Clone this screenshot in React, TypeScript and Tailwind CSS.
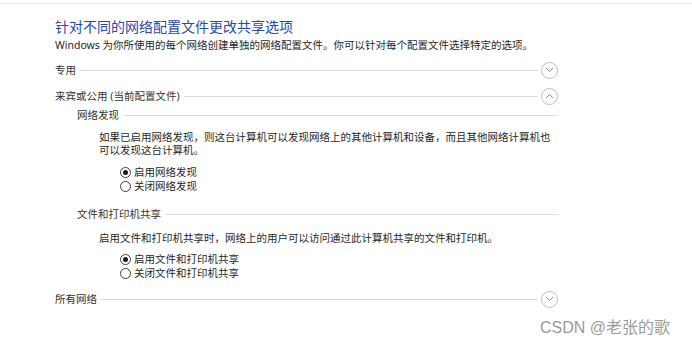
const Chevron = ({ up }: { up?: boolean }) => (
    <div className="w-[17px] h-[17px] rounded-full border border-[#bcbcbc] flex items-center justify-center shrink-0 ml-[3px]">
        <svg width="9" height="6" viewBox="0 0 9 6" fill="none">
            {up ? (
                <path d="M1 5 L4.5 1.5 L8 5" stroke="#8a8a8a" strokeWidth="1" />
            ) : (
                <path d="M1 1 L4.5 4.5 L8 1" stroke="#8a8a8a" strokeWidth="1" />
            )}
        </svg>
    </div>
);

const Section = ({ title, up }: { title: string; up?: boolean }) => (
    <div className="flex items-center h-[18px] w-[503px]">
        <span className="text-[10.5px] leading-[14px] text-[#333] whitespace-nowrap">{title}</span>
        <div className="flex-1 h-px bg-[#d9d9d9] ml-[4px]" />
        <Chevron up={up} />
    </div>
);

const SubSection = ({ title }: { title: string }) => (
    <div className="flex items-center h-[14px] w-[481px] ml-[22px]">
        <span className="text-[10.5px] leading-[14px] text-[#333] whitespace-nowrap">{title}</span>
        <div className="flex-1 h-px bg-[#dcdcdc] ml-[5px]" />
    </div>
);

const Radio = ({ label, checked }: { label: string; checked?: boolean }) => (
    <div className="flex items-center h-[14px]">
        <div className="w-[11px] h-[11px] rounded-full border border-[#3c3c3c] flex items-center justify-center bg-white">
            {checked && <div className="w-[5px] h-[5px] rounded-full bg-[#1a1a1a]" />}
        </div>
        <span className="ml-[3px] text-[10.5px] leading-[14px] text-[#1f1f1f] whitespace-nowrap">{label}</span>
    </div>
);

const App = () => {
    return (
        <div className="relative w-[692px] h-[347px] bg-white overflow-hidden" style={{ fontFamily: '"Noto Sans", "Noto Sans CJK SC", sans-serif' }}>
            <div className="mt-[3px] h-px bg-[#e2e2e2]" />

            <div className="pl-[55px]">
                <p className="mt-[14px] text-[14px] leading-[18px] text-[#2a4aa8] whitespace-nowrap">针对不同的网络配置文件更改共享选项</p>
                <p className="mt-[2px] text-[10.5px] leading-[14px] text-[#1f1f1f] whitespace-nowrap">
                    Windows 为你所使用的每个网络创建单独的网络配置文件。你可以针对每个配置文件选择特定的选项。
                </p>

                <div className="mt-[9px]">
                    <Section title="专用" />
                </div>
                <div className="mt-[8px]">
                    <Section title="来宾或公用 (当前配置文件)" up />
                </div>

                <div className="mt-[3px]">
                    <SubSection title="网络发现" />
                </div>
                <p className="mt-[9px] ml-[44px] text-[10.5px] leading-[13px] text-[#1f1f1f] whitespace-nowrap">
                    如果已启用网络发现，则这台计算机可以发现网络上的其他计算机和设备，而且其他网络计算机也
                    <br />
                    可以发现这台计算机。
                </p>
                <div className="mt-[8px] ml-[65px] flex flex-col">
                    <Radio label="启用网络发现" checked />
                    <Radio label="关闭网络发现" />
                </div>

                <div className="mt-[14px]">
                    <SubSection title="文件和打印机共享" />
                </div>
                <p className="mt-[11px] ml-[44px] text-[10.5px] leading-[12px] text-[#1f1f1f] whitespace-nowrap">
                    启用文件和打印机共享时，网络上的用户可以访问通过此计算机共享的文件和打印机。
                </p>
                <div className="mt-[8px] ml-[65px] flex flex-col">
                    <Radio label="启用文件和打印机共享" checked />
                    <Radio label="关闭文件和打印机共享" />
                </div>

                <div className="mt-[10px]">
                    <Section title="所有网络" />
                </div>
            </div>

            <span className="absolute left-[540px] top-[318px] text-[16px] leading-[20px] text-[#9a9a9a] whitespace-nowrap" style={{ fontFamily: '"Liberation Sans", "Noto Sans CJK SC", sans-serif' }}>
                CSDN @老张的歌
            </span>
        </div>
    );
};

export default App;
